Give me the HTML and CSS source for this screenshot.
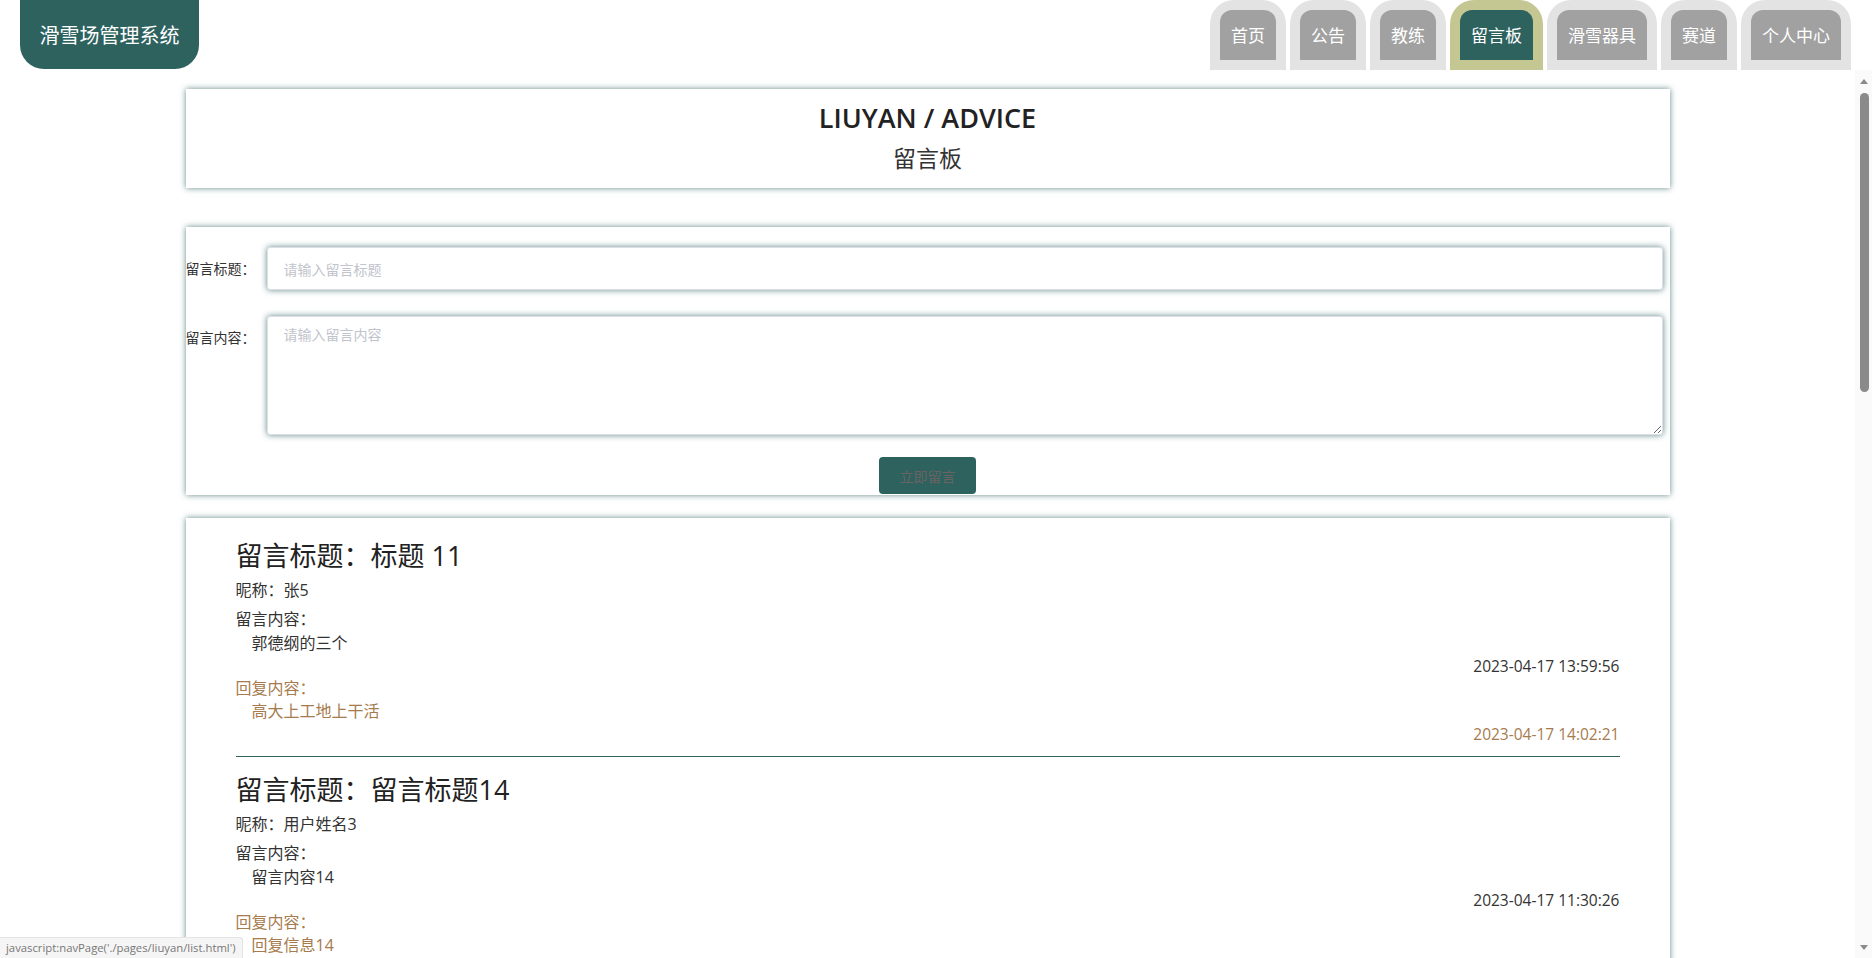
FILE: index.html
```html
<!DOCTYPE html>
<html lang="zh-CN">
<head>
<meta charset="utf-8">
<title>留言板 - 滑雪场管理系统</title>
<link rel="stylesheet" href="styles.css">
</head>
<body>
<header class="topbar">
  <div class="logo">滑雪场管理系统</div>
  <nav class="nav">
    <a class="tab"><span>首页</span></a>
    <a class="tab"><span>公告</span></a>
    <a class="tab"><span>教练</span></a>
    <a class="tab active"><span>留言板</span></a>
    <a class="tab"><span>滑雪器具</span></a>
    <a class="tab"><span>赛道</span></a>
    <a class="tab"><span>个人中心</span></a>
  </nav>
</header>

<div class="viewport">
  <main class="main">
    <section class="card title-card">
      <h1 class="en-title">LIUYAN / ADVICE</h1>
      <h2 class="cn-title">留言板</h2>
    </section>

    <section class="card form-card">
      <div class="row">
        <label class="label">留言标题：</label>
        <input class="field" type="text" placeholder="请输入留言标题">
      </div>
      <div class="row row-area">
        <label class="label">留言内容：</label>
        <textarea class="field area" placeholder="请输入留言内容"></textarea>
      </div>
      <div class="actions">
        <button class="btn" type="button">立即留言</button>
      </div>
    </section>

    <section class="card list-card">
      <div class="item">
        <h3 class="item-title">留言标题：标题 11</h3>
        <div class="nick">昵称：张5</div>
        <div class="lbl">留言内容：</div>
        <div class="content">郭德纲的三个</div>
        <div class="time">2023-04-17 13:59:56</div>
        <div class="reply-lbl">回复内容：</div>
        <div class="reply">高大上工地上干活</div>
        <div class="time reply-time">2023-04-17 14:02:21</div>
        <div class="rule"></div>
      </div>
      <div class="item">
        <h3 class="item-title">留言标题：留言标题14</h3>
        <div class="nick">昵称：用户姓名3</div>
        <div class="lbl">留言内容：</div>
        <div class="content">留言内容14</div>
        <div class="time">2023-04-17 11:30:26</div>
        <div class="reply-lbl">回复内容：</div>
        <div class="reply">回复信息14</div>
      </div>
    </section>
  </main>

  <div class="vscroll" aria-hidden="true">
    <span class="arrow-up"></span>
    <span class="thumb"></span>
    <span class="arrow-down"></span>
  </div>
</div>

<div class="status">javascript:navPage('./pages/liuyan/list.html')</div>
</body>
</html>
```

FILE: styles.css
```css
html, body {
  margin: 0;
  height: 100%;
  overflow: hidden;
}

body {
  font-family: "Open Sans", "Noto Sans CJK SC", sans-serif;
  color: #333;
  background: #fff;
}

/* ---------- top bar ---------- */
.topbar {
  height: 70px;
  display: flex;
  justify-content: space-between;
  align-items: flex-start;
  padding: 0 21px 0 20px;
  box-sizing: border-box;
  background: #fff;
}

.logo {
  width: 179px;
  height: 69px;
  background: #2d625f;
  color: #fff;
  border-radius: 0 0 24px 24px;
  display: flex;
  align-items: center;
  justify-content: center;
  font-size: 20px;
  font-family: "Noto Sans CJK SC", sans-serif;
}

.nav {
  display: flex;
  gap: 4px;
}

.tab {
  display: block;
  height: 70px;
  padding: 10px 10px 0;
  box-sizing: border-box;
  background: #e3e3e3;
  border-radius: 24px 24px 0 0;
  cursor: pointer;
}

.tab span {
  display: block;
  height: 50px;
  line-height: 50px;
  padding: 0 11px;
  background: #a1a1a1;
  color: #fff;
  font-size: 17px;
  font-family: "Noto Sans CJK SC", sans-serif;
  border-radius: 12px 12px 0 0;
}

.tab.active {
  background: #c5c793;
}

.tab.active span {
  background: #2d625f;
}

/* ---------- content frame with its scrollbar ---------- */
.viewport {
  display: flex;
  height: calc(100% - 70px);
}

.main {
  flex: 1;
  min-width: 0;
  overflow: hidden;
  padding-top: 19px;
  box-sizing: border-box;
}

.vscroll {
  flex: none;
  width: 17px;
  background: #fafafa;
  display: flex;
  flex-direction: column;
  align-items: center;
}

.arrow-up {
  width: 0;
  height: 0;
  margin-top: 9px;
  border-left: 4px solid transparent;
  border-right: 4px solid transparent;
  border-bottom: 5px solid #8a8a8a;
}

.thumb {
  width: 9px;
  height: 299px;
  margin-top: 9px;
  margin-left: 1px;
  border-radius: 5px;
  background: #8a8a8a;
}

.arrow-down {
  width: 0;
  height: 0;
  margin-top: auto;
  margin-bottom: 8px;
  border-left: 4px solid transparent;
  border-right: 4px solid transparent;
  border-top: 5px solid #8a8a8a;
}

.card {
  width: 80%;
  margin: 0 auto;
  background: #fff;
  box-shadow: 0 0 6px rgba(45, 98, 95, 0.75);
  box-sizing: border-box;
}

/* ---------- title card ---------- */
.title-card {
  height: 99px;
  padding-top: 10px;
  text-align: center;
}

.en-title {
  margin: 0;
  font-size: 27px;
  font-weight: 600;
  line-height: 38px;
  color: #222;
}

.cn-title {
  margin: 0;
  font-size: 23px;
  font-weight: 400;
  line-height: 40px;
  color: #333;
  font-family: "Noto Sans CJK SC", sans-serif;
}

/* ---------- form card ---------- */
.form-card {
  margin-top: 39px;
  height: 268px;
  padding-top: 20px;
}

.row {
  display: flex;
  align-items: flex-start;
}

.row-area {
  margin-top: 26px;
}

.label {
  flex: none;
  width: 81px;
  line-height: 43px;
  font-size: 14px;
  color: #333;
  font-family: "Noto Sans CJK SC", sans-serif;
}

.field {
  flex: 1;
  margin-right: 7px;
  height: 43px;
  box-sizing: border-box;
  border: 1px solid #dcdfe6;
  border-radius: 3px;
  padding: 0 16px;
  font-size: 14px;
  font-family: "Noto Sans CJK SC", sans-serif;
  color: #333;
  background: #fff;
  box-shadow: 0 0 6px rgba(45, 98, 95, 0.75);
  outline: none;
}

.field::placeholder {
  color: #c0c4cc;
}

.area {
  height: 119px;
  padding: 7px 16px;
  line-height: 21px;
  resize: vertical;
}

.actions {
  margin-top: 22px;
  text-align: center;
}

.btn {
  width: 97px;
  height: 37px;
  background: #2d625f;
  border: none;
  border-radius: 4px;
  color: #6b6262;
  font-size: 14px;
  font-family: "Noto Sans CJK SC", sans-serif;
  cursor: pointer;
}

/* ---------- message list ---------- */
.list-card {
  margin-top: 23px;
  padding: 21px 50px 40px;
}

.item + .item {
  margin-top: 16px;
}

.item-title {
  margin: 0;
  font-size: 27px;
  font-weight: 400;
  line-height: 34px;
  color: #222;
}

.nick,
.lbl,
.content,
.reply {
  font-size: 16px;
  line-height: 24px;
}

.nick,
.lbl {
  margin-top: 5px;
}

.content,
.reply {
  padding-left: 16px;
}

.time,
.reply-lbl {
  font-size: 15.5px;
  line-height: 22px;
}

.reply-lbl {
  font-size: 16px;
}

.time {
  text-align: right;
}

.reply-lbl,
.reply,
.reply-time {
  color: #a67b4e;
}

.rule {
  margin-top: 11px;
  border-top: 1px solid #2d625f;
}

/* ---------- browser status bubble ---------- */
.status {
  position: fixed;
  left: 0;
  bottom: 0;
  height: 20px;
  line-height: 20px;
  padding: 0 6px;
  font-size: 11.3px;
  font-family: "Open Sans", sans-serif;
  color: #777;
  background: #f5f5f5;
  border-top: 1px solid #e4e4e4;
  border-right: 1px solid #e4e4e4;
  border-top-right-radius: 3px;
}
```
